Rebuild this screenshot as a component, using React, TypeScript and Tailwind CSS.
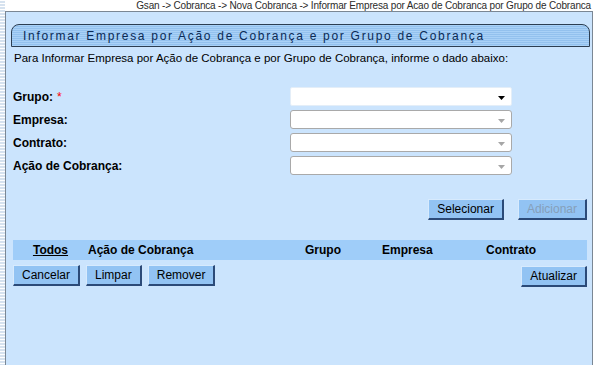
import React from "react";

function Arrow({ enabled }: { enabled: boolean }) {
  return (
    <svg width="7" height="4" viewBox="0 0 7 4" className="absolute right-[6px] top-[8px]">
      <polygon points="0,0 7,0 3.5,4" fill={enabled ? "#000000" : "#a6a6a6"} />
    </svg>
  );
}

function Select({ enabled = false }: { enabled?: boolean }) {
  return (
    <div
      className={
        enabled
          ? "relative w-[222px] h-[19px] bg-white border border-[#e4eef8] rounded-[2px]"
          : "relative w-[222px] h-[19px] bg-white border border-[#a9a9a9] rounded-[3px]"
      }
    >
      <Arrow enabled={enabled} />
    </div>
  );
}

function Button({ label, disabled = false }: { label: string; disabled?: boolean }) {
  return (
    <button
      className={
        "h-[21px] px-[8px] text-[12px] leading-[16px] bg-[#92c3f3] border-t border-l border-t-[#d7eafd] border-l-[#d7eafd] border-r-2 border-b-2 border-r-[#2b4a78] border-b-[#2b4a78] " +
        (disabled ? "text-[#869fb9]" : "text-black")
      }
    >
      {label}
    </button>
  );
}

function FormRow({ label, required, enabled }: { label: string; required?: boolean; enabled?: boolean }) {
  return (
    <div className="flex items-center h-[23px]">
      <div className="w-[277px] text-[12px] font-bold text-black">
        {label}
        {required && <span className="text-[#ff0000] font-normal ml-[4px]">*</span>}
      </div>
      <Select enabled={enabled} />
    </div>
  );
}

export default function App() {
  return (
    <div className="w-[597px] h-[365px] flex bg-white overflow-hidden font-['Liberation_Sans',Arial,sans-serif]">
      <div className="w-[5px] shrink-0 h-full bg-[repeating-linear-gradient(to_bottom,#ffffff_0px,#ffffff_1px,#d6e2ef_1px,#d6e2ef_3px)]" />
      <div className="flex flex-col flex-1">
        <div className="h-[11px] pr-[6px] text-right text-[10px] leading-[11px] tracking-[-0.17px] text-[#2b2b2b] whitespace-nowrap">
          Gsan -&gt; Cobranca -&gt; Nova Cobranca -&gt; Informar Empresa por Acao de Cobranca por Grupo de Cobranca
        </div>
        <div className="w-[588px] flex-1 border-l border-r border-t border-[#7b8794] bg-[#cbe4fd] pl-[7px] pr-[5px] pt-[12px]">
          <div className="-ml-[2px] -mr-[3px] h-[23px] flex items-center px-[11px] rounded-tl-[8px] rounded-tr-[8px] border border-[#2c3e52] bg-[repeating-linear-gradient(to_bottom,#a9d1f7_0px,#a9d1f7_1px,#93c1ee_1px,#93c1ee_2px)]">
            <span className="text-[12px] tracking-[1.7px] text-[#0a2a55]">
              Informar Empresa por Ação de Cobrança e por Grupo de Cobrança
            </span>
          </div>
          <p className="mt-[4px] ml-[1px] text-[11.5px] leading-[14px] text-black">
            Para Informar Empresa por Ação de Cobrança e por Grupo de Cobrança, informe o dado abaixo:
          </p>
          <div className="mt-[20px] flex flex-col">
            <FormRow label="Grupo:" required enabled />
            <FormRow label="Empresa:" />
            <FormRow label="Contrato:" />
            <FormRow label="Ação de Cobrança:" />
          </div>
          <div className="mt-[22px] flex justify-end gap-[14px]">
            <Button label="Selecionar" />
            <Button label="Adicionar" disabled />
          </div>
          <div className="mt-[20px] h-[20px] grid grid-cols-[75px_217px_77px_104px_1fr] items-center bg-[#9fcdf9] text-[12px] font-bold text-black">
            <span className="text-center underline">Todos</span>
            <span>Ação de Cobrança</span>
            <span>Grupo</span>
            <span>Empresa</span>
            <span>Contrato</span>
          </div>
          <div className="mt-[3px] flex items-center">
            <div className="flex gap-[6px]">
              <Button label="Cancelar" />
              <Button label="Limpar" />
              <Button label="Remover" />
            </div>
            <div className="ml-auto">
              <Button label="Atualizar" />
            </div>
          </div>
        </div>
      </div>
    </div>
  );
}
